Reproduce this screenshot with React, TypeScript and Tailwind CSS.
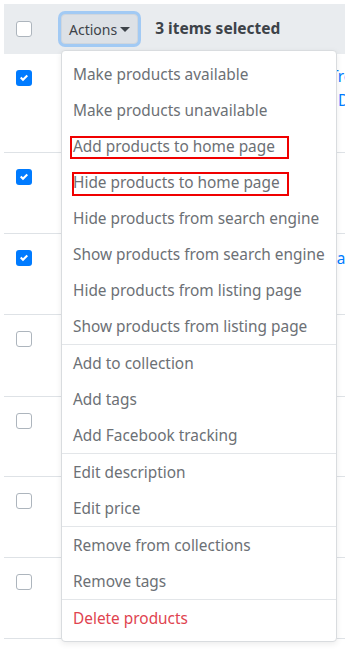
import React from 'react'

const font = { fontFamily: '"Noto Sans", "Open Sans", Arial, sans-serif' }

function Check({ checked }: { checked?: boolean }) {
  if (checked) {
    return (
      <span className="flex h-4 w-4 items-center justify-center rounded-[3px] bg-[#007bff]">
        <svg viewBox="0 0 8 8" className="h-2 w-2">
          <path d="M6.564.75l-3.59 3.612-1.538-1.55L0 4.26l2.974 2.99L8 2.193z" fill="#fff" />
        </svg>
      </span>
    )
  }
  return <span className="block h-4 w-4 rounded-[3px] border border-[#adb5bd] bg-white" />
}

type Item = { label: string; danger?: boolean; mark?: 'a' | 'b' }

const groups: Item[][] = [
  [
    { label: 'Make products available' },
    { label: 'Make products unavailable' },
    { label: 'Add products to home page', mark: 'a' },
    { label: 'Hide products to home page', mark: 'b' },
    { label: 'Hide products from search engine' },
    { label: 'Show products from search engine' },
    { label: 'Hide products from listing page' },
    { label: 'Show products from listing page' },
  ],
  [{ label: 'Add to collection' }, { label: 'Add tags' }, { label: 'Add Facebook tracking' }],
  [{ label: 'Edit description' }, { label: 'Edit price' }],
  [{ label: 'Remove from collections' }, { label: 'Remove tags' }],
  [{ label: 'Delete products', danger: true }],
]

const rows = [
  { checked: true, h: 'h-[98px]' },
  { checked: true, h: 'h-[81px]' },
  { checked: true, h: 'h-[81px]' },
  { checked: false, h: 'h-[82px]' },
  { checked: false, h: 'h-[80px]' },
  { checked: false, h: 'h-[81px]' },
  { checked: false, h: 'h-[81px]' },
]

function ActionsMenu() {
  return (
    <div className="absolute left-0 top-full z-10 mt-[6px] w-[276px] rounded-[4px] border border-[#d9dcdf] bg-white py-[5px] shadow-[0_2px_6px_rgba(0,0,0,0.08)]">
      {groups.map((g, gi) => (
        <div key={gi} className={gi > 0 ? 'border-t border-[#e3e6e9]' : ''}>
          {g.map((it) => (
            <div
              key={it.label}
              className={`relative flex h-9 items-center whitespace-nowrap pl-[11px] pt-[2px] text-[15.4px] ${
                it.danger ? 'text-[#e0434f]' : 'text-[#6c7075]'
              }`}
            >
              {it.label}
              {it.mark === 'a' && (
                <span className="absolute left-[8px] top-[8px] h-[23px] w-[219px] border-2 border-[#f00000]" />
              )}
              {it.mark === 'b' && (
                <span className="absolute left-[10px] top-[8px] h-[24px] w-[217px] border-2 border-[#f00000]" />
              )}
            </div>
          ))}
        </div>
      ))}
    </div>
  )
}

export default function App() {
  return (
    <div className="min-h-screen overflow-hidden bg-white pl-1 pt-1" style={font}>
      <div className="w-[600px]">
        {/* Header */}
        <div className="flex h-[50px] items-center bg-[#e9ecef]">
          <div className="pl-3">
            <Check />
          </div>
          <div className="relative ml-[29px]">
            <button className="flex h-[30px] items-center gap-[3px] rounded-[4px] border border-[#cfd6de] bg-[#dde1e6] pl-[7px] pr-[7px] text-[14px] text-[#3d4349] shadow-[0_0_0_3px_rgba(0,123,255,0.3)]">
              Actions
              <svg viewBox="0 0 10 5" className="h-[5px] w-[10px]">
                <path d="M0 0h10L5 5z" fill="#3d4349" />
              </svg>
            </button>
            <ActionsMenu />
          </div>
          <span className="ml-[17px] text-[15.5px] font-bold text-[#3d4349]">3 items selected</span>
        </div>

        {/* Rows */}
        {rows.map((r, i) => (
          <div key={i} className={`flex ${r.h} border-[#dee2e6] ${i === 0 ? '' : 'border-t'}`}>
            <div className="w-[60px] shrink-0 pl-3 pt-4">
              <Check checked={r.checked} />
            </div>
            {i === 0 && (
              <div className="ml-[266px] pt-[11px] text-[15.4px] leading-6 text-[#007bff]">
                <div className="whitespace-nowrap">Trendy</div>
                <div className="ml-[8px] whitespace-nowrap">Dress</div>
              </div>
            )}
            {i === 2 && (
              <div className="ml-[254px] whitespace-nowrap pt-[13px] text-[15.4px] leading-6 text-[#007bff]">
                Bear
              </div>
            )}
          </div>
        ))}
        <div className="border-t border-[#dee2e6]" />
      </div>
    </div>
  )
}
